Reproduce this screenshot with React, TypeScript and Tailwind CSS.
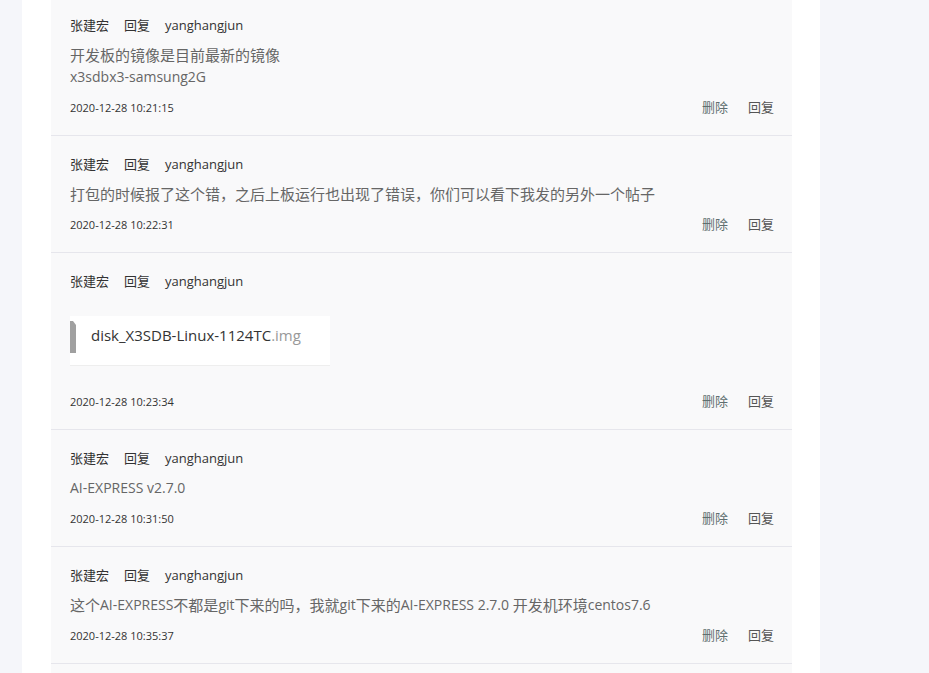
import React from "react";

type Item = {
  date: string;
  lines?: string[];
  file?: boolean;
};

const items: Item[] = [
  { date: "2020-12-28 10:21:15", lines: ["开发板的镜像是目前最新的镜像", "x3sdbx3-samsung2G"] },
  { date: "2020-12-28 10:22:31", lines: ["打包的时候报了这个错，之后上板运行也出现了错误，你们可以看下我发的另外一个帖子"] },
  { date: "2020-12-28 10:23:34", file: true },
  { date: "2020-12-28 10:31:50", lines: ["AI-EXPRESS v2.7.0"] },
  { date: "2020-12-28 10:35:37", lines: ["这个AI-EXPRESS不都是git下来的吗，我就git下来的AI-EXPRESS 2.7.0 开发机环境centos7.6"] },
];

function Mixed({ text }: { text: string }) {
  const parts = text.split(/([\u3000-\u303f\u4e00-\u9fff\uff00-\uffef]+)/).filter((p) => p.length > 0);
  return (
    <>
      {parts.map((p, i) =>
        /[\u3000-\u303f\u4e00-\u9fff\uff00-\uffef]/.test(p) ? (
          <span key={i} className="text-[15px] leading-[22px]">
            {p}
          </span>
        ) : (
          <span key={i} className="leading-[22px]">{p}</span>
        )
      )}
    </>
  );
}

function Row({ item }: { item: Item }) {
  return (
    <div className="border-b border-[#e6e6ec] pl-[19px] pr-[18px] pt-[19px] pb-[17px]">
      <div className="flex items-center h-[20px] text-[13px] text-[#333]">
        <span>张建宏</span>
        <span className="ml-[15px]">回复</span>
        <span className="ml-[15px]">yanghangjun</span>
      </div>
      {item.lines && (
        <div className="mt-[8px] text-[14px] leading-[22px] text-[#666]">
          {item.lines.map((l, i) => (
            <div key={i} className="h-[22px] flex items-center whitespace-pre">
              <Mixed text={l} />
            </div>
          ))}
        </div>
      )}
      {item.file && (
        <div className="mt-[24px] flex items-start h-[50px] w-[260px] bg-white border-b border-[#eeeeee]">
          <svg width="6" height="32" viewBox="0 0 6 32" className="mt-[5px] shrink-0">
            <polygon points="0,0 3,0 6,4 6,32 0,32" fill="#a0a0a0" />
          </svg>
          <span className="ml-[15px] mt-[9px] leading-[20px] text-[15px] text-[#333]">
            disk_X3SDB-Linux-1124TC<span className="text-[#999]">.img</span>
          </span>
        </div>
      )}
      <div className={"flex items-center justify-between h-[20px] " + (item.file ? "mt-[26px]" : "mt-[10px]")}>
        <span className="text-[11px] text-[#333]">{item.date}</span>
        <div className="flex items-center text-[13px] text-[#5f6f70]">
          <span>删除</span>
          <span className="ml-[20px] text-[#555]">回复</span>
        </div>
      </div>
    </div>
  );
}

export default function App() {
  return (
    <div
      className="w-[929px] h-[673px] overflow-hidden bg-[#f5f6fa] flex"
      style={{ fontFamily: '"Open Sans", "Noto Sans CJK SC", sans-serif' }}
    >
      <div className="ml-[22px] w-[798px] h-full bg-white pl-[29px] pr-[28px]">
        <div className="bg-[#f9f9fa] -mt-[3px]">
          {items.map((it, i) => (
            <Row key={i} item={it} />
          ))}
          <div className="h-[40px]" />
        </div>
      </div>
    </div>
  );
}
